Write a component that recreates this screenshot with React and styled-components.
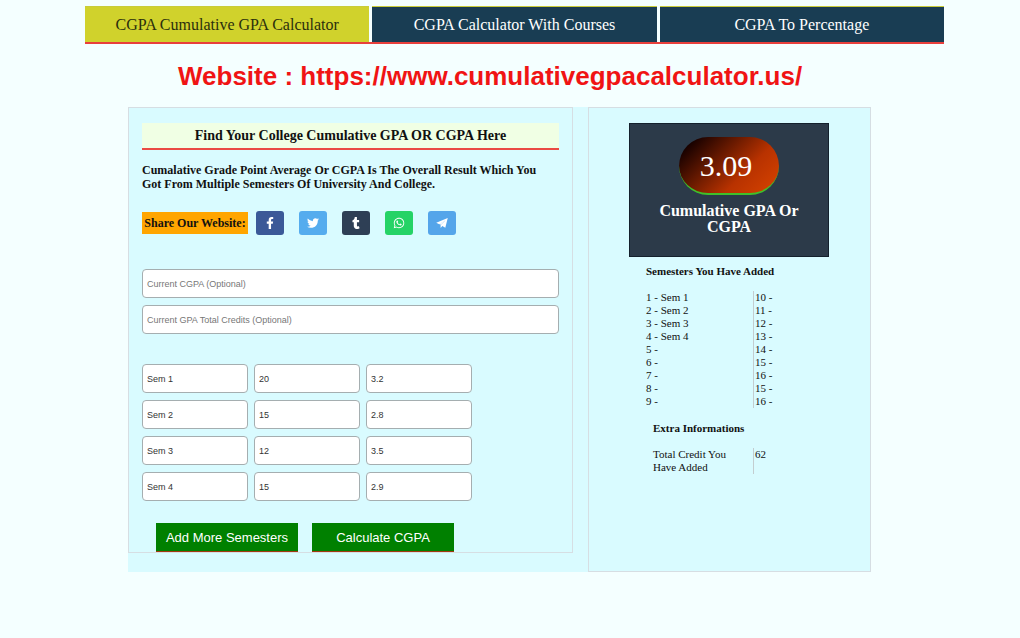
import React, { useState } from 'react';
import styled, { createGlobalStyle } from 'styled-components';
import { FaFacebookF, FaTwitter, FaTumblr, FaWhatsapp } from 'react-icons/fa';

const PlaneIcon = () => (
  <svg width="1em" height="1em" viewBox="0 0 24 24" fill="currentColor">
    <path d="M23.5 2 L0.5 11.5 L6.5 14.6 L19 6.5 L9.2 15.8 V22 L12.6 18 L18.6 21.6 Z" />
    <path d="M6.5 14.2 L20 5 L9.6 15.6 Z" />
  </svg>
);

const shareLinks = [
  { name: 'Facebook', color: '#3b5998', Icon: FaFacebookF },
  { name: 'Twitter', color: '#55acee', Icon: FaTwitter },
  { name: 'Tumblr', color: '#2e3f55', Icon: FaTumblr },
  { name: 'WhatsApp', color: '#25d366', Icon: FaWhatsapp },
  { name: 'Telegram', color: '#54a5ea', Icon: PlaneIcon },
];

const startSemesters = [
  { name: 'Sem 1', credits: '20', gpa: '3.2' },
  { name: 'Sem 2', credits: '15', gpa: '2.8' },
  { name: 'Sem 3', credits: '12', gpa: '3.5' },
  { name: 'Sem 4', credits: '15', gpa: '2.9' },
];

const firstSlots = [1, 2, 3, 4, 5, 6, 7, 8, 9];
const secondSlots = [10, 11, 12, 13, 14, 15, 16, 15, 16];

const App = () => {
  const [semesters, setSemesters] = useState(startSemesters);
  const [currentCgpa, setCurrentCgpa] = useState('');
  const [currentCredits, setCurrentCredits] = useState('');
  const [result, setResult] = useState({ cgpa: '3.09', credits: 62 });

  const updateSemester = (index, field, value) => {
    setSemesters(semesters.map((sem, i) => (i === index ? { ...sem, [field]: value } : sem)));
  };

  const addSemester = () => {
    setSemesters([...semesters, { name: `Sem ${semesters.length + 1}`, credits: '', gpa: '' }]);
  };

  const calculate = (e) => {
    e.preventDefault();
    let credits = Number(currentCredits) || 0;
    let points = credits * (Number(currentCgpa) || 0);
    semesters.forEach((sem) => {
      credits += Number(sem.credits) || 0;
      points += (Number(sem.credits) || 0) * (Number(sem.gpa) || 0);
    });
    setResult({ cgpa: credits ? (points / credits).toFixed(2) : '0.00', credits });
  };

  return (
    <>
      <GlobalStyle />
      <Nav>
        <NavLink href="#cgpa" $active>CGPA Cumulative GPA Calculator</NavLink>
        <NavLink href="#courses">CGPA Calculator With Courses</NavLink>
        <NavLink href="#percentage">CGPA To Percentage</NavLink>
      </Nav>

      <Page>
        <SiteTitle>Website : https://www.cumulativegpacalculator.us/</SiteTitle>

        <Content>
          <Calculator onSubmit={calculate}>
            <Heading>Find Your College Cumulative GPA OR CGPA Here</Heading>
            <Intro>
              Cumalative Grade Point Average Or CGPA Is The Overall Result Which You
              Got From Multiple Semesters Of University And College.
            </Intro>

            <ShareRow>
              <ShareLabel>Share Our Website:</ShareLabel>
              <ShareList>
                {shareLinks.map(({ name, color, Icon }) => (
                  <ShareButton key={name} type="button" aria-label={name} $color={color}>
                    <Icon />
                  </ShareButton>
                ))}
              </ShareList>
            </ShareRow>

            <FieldStack>
              <Field
                aria-label="Current CGPA"
                placeholder="Current CGPA (Optional)"
                value={currentCgpa}
                onChange={(e) => setCurrentCgpa(e.target.value)}
              />
              <Field
                aria-label="Current GPA Total Credits"
                placeholder="Current GPA Total Credits (Optional)"
                value={currentCredits}
                onChange={(e) => setCurrentCredits(e.target.value)}
              />
            </FieldStack>

            <SemesterGrid>
              {semesters.map((sem, i) => (
                <React.Fragment key={i}>
                  <Field
                    aria-label={`Semester ${i + 1} name`}
                    value={sem.name}
                    onChange={(e) => updateSemester(i, 'name', e.target.value)}
                  />
                  <Field
                    aria-label={`Semester ${i + 1} credits`}
                    value={sem.credits}
                    onChange={(e) => updateSemester(i, 'credits', e.target.value)}
                  />
                  <Field
                    aria-label={`Semester ${i + 1} GPA`}
                    value={sem.gpa}
                    onChange={(e) => updateSemester(i, 'gpa', e.target.value)}
                  />
                </React.Fragment>
              ))}
            </SemesterGrid>

            <Actions>
              <ActionButton type="button" onClick={addSemester}>Add More Semesters</ActionButton>
              <ActionButton type="submit">Calculate CGPA</ActionButton>
            </Actions>
          </Calculator>

          <Results>
            <ScoreCard>
              <Score>{result.cgpa}</Score>
              <ScoreLabel>Cumulative GPA Or CGPA</ScoreLabel>
            </ScoreCard>

            <Summary>
              <SummaryTitle>Semesters You Have Added</SummaryTitle>
              <SummaryColumns>
                <SlotList>
                  {firstSlots.map((n, i) => (
                    <li key={i}>{n} - {semesters[i] ? semesters[i].name : ''}</li>
                  ))}
                </SlotList>
                <SlotList $divided>
                  {secondSlots.map((n, i) => (
                    <li key={i}>{n} - {semesters[i + 9] ? semesters[i + 9].name : ''}</li>
                  ))}
                </SlotList>
              </SummaryColumns>
            </Summary>

            <Summary $inset>
              <SummaryTitle>Extra Informations</SummaryTitle>
              <SummaryColumns $inset>
                <SlotText>Total Credit You Have Added</SlotText>
                <SlotText $divided>{result.credits}</SlotText>
              </SummaryColumns>
            </Summary>
          </Results>
        </Content>
      </Page>
    </>
  );
};

const GlobalStyle = createGlobalStyle`
  * {
    box-sizing: border-box;
  }

  body {
    margin: 0;
    background-color: #f4ffff;
    color: #111;
    font-family: 'Liberation Serif', 'Times New Roman', serif;
  }

  h1, h2, h3, p, ul {
    margin: 0;
    padding: 0;
  }
`;

const Nav = styled.nav`
  display: grid;
  grid-template-columns: repeat(3, 1fr);
  gap: 3px;
  margin: 6px 76px 0 85px;
  border-bottom: 2px solid #e8403c;
`;

const NavLink = styled.a`
  padding: 9px 4px 8px;
  border-top: 1px solid #c9cc3a;
  background-color: ${({ $active }) => ($active ? '#d0d22c' : '#193d53')};
  color: ${({ $active }) => ($active ? '#2b2f0c' : '#fff')};
  font-size: 16px;
  line-height: 18px;
  text-align: center;
  text-decoration: none;
`;

const Page = styled.main`
  padding: 0 149px 66px 128px;
`;

const SiteTitle = styled.h1`
  padding: 16px 0 14px 50px;
  color: #f01414;
  font-family: 'Liberation Sans', Arial, sans-serif;
  font-size: 26px;
  line-height: 33px;
`;

const Content = styled.div`
  display: grid;
  grid-template-columns: 445fr 283fr;
  gap: 15px;
  background-color: #d9fbff;
`;

const Calculator = styled.form`
  align-self: start;
  padding: 15px 13px 0;
  border: 1px solid #d6dee3;
`;

const Heading = styled.h2`
  padding: 5px 0 4px;
  border-bottom: 2px solid #ea4a42;
  background-color: #f0ffe4;
  font-size: 14px;
  line-height: 16px;
  text-align: center;
`;

const Intro = styled.p`
  margin-top: 13px;
  padding-right: 16px;
  font-size: 12px;
  font-weight: bold;
  line-height: 14px;
`;

const ShareRow = styled.div`
  display: flex;
  align-items: center;
  gap: 8px;
  margin-top: 20px;
`;

const ShareLabel = styled.span`
  width: 106px;
  background-color: #ffa500;
  font-size: 12px;
  font-weight: bold;
  line-height: 22px;
  text-align: center;
`;

const ShareList = styled.div`
  display: flex;
  gap: 15px;
`;

const ShareButton = styled.button`
  display: flex;
  align-items: center;
  justify-content: center;
  width: 28px;
  height: 24px;
  padding: 0;
  border: none;
  border-radius: 3px;
  background-color: ${({ $color }) => $color};
  color: #fff;
  font-size: 12px;
  cursor: pointer;
`;

const FieldStack = styled.div`
  display: grid;
  gap: 7px;
  margin-top: 34px;
`;

const Field = styled.input`
  width: 100%;
  height: 29px;
  padding: 0 4px;
  border: 1px solid #a5aeb0;
  border-radius: 4px;
  background-color: #fff;
  color: #333;
  font-family: 'Liberation Sans', Arial, sans-serif;
  font-size: 9px;

  &::placeholder {
    color: #777;
    opacity: 1;
  }
`;

const SemesterGrid = styled.div`
  display: grid;
  grid-template-columns: repeat(3, 106px);
  gap: 7px 6px;
  margin-top: 30px;
`;

const Actions = styled.div`
  display: flex;
  gap: 14px;
  margin: 22px 0 0 14px;
`;

const ActionButton = styled.button`
  width: 142px;
  height: 29px;
  padding: 0;
  border: none;
  border-bottom: 1px solid #a03a10;
  background-color: #008000;
  color: #fff;
  font-family: 'Liberation Sans', Arial, sans-serif;
  font-size: 13px;
  cursor: pointer;
`;

const Results = styled.section`
  padding: 15px 41px 97px 40px;
  border: 1px solid #d6dee3;
`;

const ScoreCard = styled.div`
  display: flex;
  flex-direction: column;
  align-items: center;
  height: 134px;
  padding: 13px 24px 0;
  border: 1px solid #14202c;
  background-color: #2c3a49;
  color: #fff;
`;

const Score = styled.output`
  width: 100px;
  height: 58px;
  padding-right: 6px;
  border-bottom: 2px solid #3fc02a;
  border-radius: 30px;
  background-image: linear-gradient(135deg, #140000 10%, #b83200 65%, #d84400 100%);
  font-size: 30px;
  line-height: 57px;
  text-align: center;
`;

const ScoreLabel = styled.h3`
  margin-top: 8px;
  font-size: 16px;
  line-height: 16px;
  text-align: center;
`;

const Summary = styled.div`
  margin-top: ${({ $inset }) => ($inset ? '14px' : '8px')};
  padding-left: ${({ $inset }) => ($inset ? '24px' : '17px')};
`;

const SummaryTitle = styled.h3`
  font-size: 11px;
  line-height: 13px;
`;

const SummaryColumns = styled.div`
  display: grid;
  grid-template-columns: ${({ $inset }) => ($inset ? '100px' : '107px')} 1fr;
  margin-top: 13px;
`;

const SlotList = styled.ul`
  border-left: ${({ $divided }) => ($divided ? '1px solid #c3cdd0' : 'none')};
  padding-left: ${({ $divided }) => ($divided ? '1px' : '0')};
  font-size: 11px;
  line-height: 13px;
  list-style: none;
`;

const SlotText = styled.p`
  border-left: ${({ $divided }) => ($divided ? '1px solid #c3cdd0' : 'none')};
  padding: ${({ $divided }) => ($divided ? '0 0 0 1px' : '0 12px 0 0')};
  font-size: 11px;
  line-height: 13px;
`;

export default App;
